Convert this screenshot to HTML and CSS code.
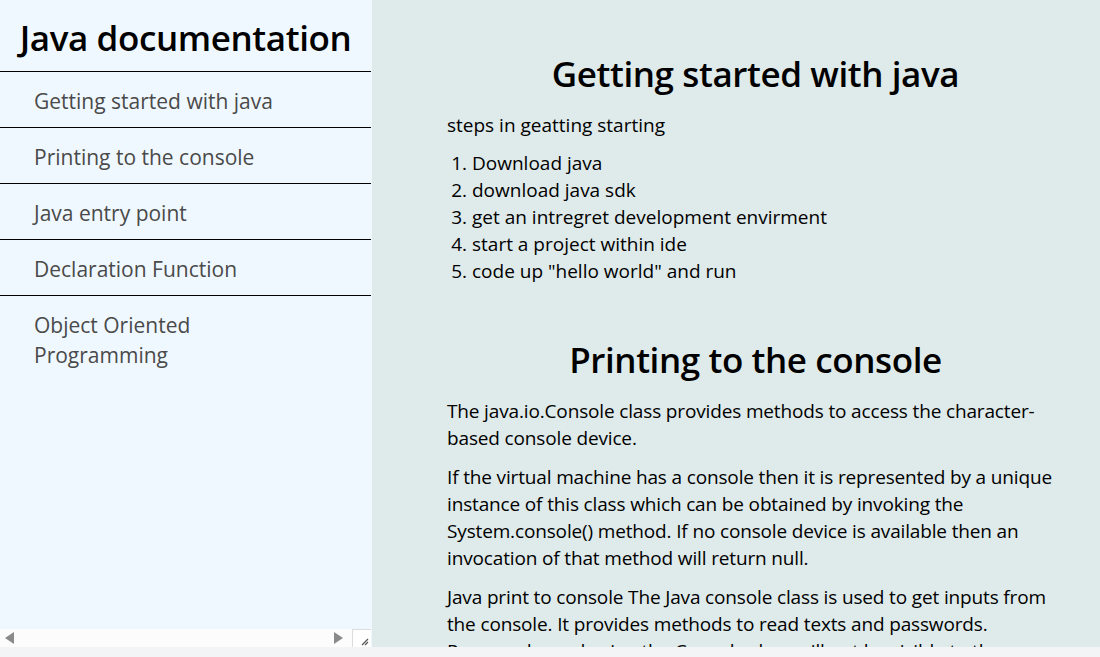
FILE: index.html
```html
<!DOCTYPE html>
<html lang="en">
<head>
<meta charset="utf-8">
<title>Java documentation</title>
<link rel="stylesheet" href="styles.css">
</head>
<body>
<div class="page">
  <div class="top">
    <nav class="nav">
      <div class="nav-scroll">
        <header class="nav-header">Java documentation</header>
        <a class="nav-link" href="#getting">Getting started with java</a>
        <a class="nav-link" href="#printing">Printing to the console</a>
        <a class="nav-link" href="#entry">Java entry point</a>
        <a class="nav-link" href="#declaration">Declaration Function</a>
        <a class="nav-link last" href="#oop">Object Oriented Programming</a>
      </div>
      <div class="hscroll">
        <span class="arrow left"></span>
        <span class="track"></span>
        <span class="arrow right"></span>
        <span class="corner">
          <svg width="10" height="10" viewBox="0 0 10 10"><path d="M9 3 L3 9 M9 6 L6 9" stroke="#555" stroke-width="1.2" fill="none"/></svg>
        </span>
      </div>
    </nav>
    <main class="main">
      <section class="section" id="getting">
        <h1 class="title">Getting started with java</h1>
        <p>steps in geatting starting</p>
        <ol class="steps">
          <li>Download java</li>
          <li>download java sdk</li>
          <li>get an intregret development envirment</li>
          <li>start a project within ide</li>
          <li>code up "hello world" and run</li>
        </ol>
      </section>
      <section class="section" id="printing">
        <h1 class="title">Printing to the console</h1>
        <p class="body">The java.io.Console class provides methods to access the character-based console device.</p>
        <p class="body">If the virtual machine has a console then it is represented by a unique instance of this class which can be obtained by invoking the System.console() method. If no console device is available then an invocation of that method will return null.</p>
        <p class="body">Java print to console The Java console class is used to get inputs from the console. It provides methods to read texts and passwords. Passwords read using the Console class will not be visible to the user.</p>
      </section>
    </main>
  </div>
  <div class="bottom-strip"></div>
</div>
</body>
</html>
```

FILE: styles.css
```css
* { box-sizing: border-box; }
html, body { margin: 0; padding: 0; }
body {
  font-family: "Open Sans", "Noto Sans", sans-serif;
  color: #000;
  background: #f3f4f5;
  overflow: hidden;
}
.page {
  width: 1100px;
  height: 657px;
  display: flex;
  flex-direction: column;
}
.top {
  flex: 1;
  display: flex;
  min-height: 0;
}
.nav {
  width: 372px;
  flex: none;
  background: #f0f8ff;
  display: flex;
  flex-direction: column;
}
.nav-scroll {
  flex: 1;
  display: flex;
  flex-direction: column;
  width: 371px;
}
.nav-header {
  height: 72px;
  border-bottom: 1px solid #000;
  font-size: 35px;
  font-weight: 600;
  text-align: center;
  line-height: 76px;
  letter-spacing: -0.4px;
}
.nav-link {
  display: block;
  height: 56px;
  border-bottom: 1px solid #000;
  padding: 14px 34px 0;
  font-size: 21px;
  line-height: 30px;
  color: #4a4a4a;
  text-decoration: none;
}
.nav-link.last {
  border-bottom: none;
  padding-right: 150px;
}
.hscroll {
  height: 18px;
  display: flex;
  align-items: center;
  background: #fcfcfc;
  width: 371px;
}
.arrow {
  width: 0;
  height: 0;
  border-top: 6px solid transparent;
  border-bottom: 6px solid transparent;
  flex: none;
}
.arrow.left { border-right: 9px solid #8a8a8a; margin-left: 5px; }
.arrow.right { border-left: 9px solid #8a8a8a; margin-right: 9px; }
.track { flex: 1; }
.corner {
  width: 19px;
  height: 18px;
  border-left: 1px solid #dcdcdc;
  border-top: 1px solid #dcdcdc;
  display: flex;
  align-items: flex-end;
  justify-content: flex-end;
  padding: 0 2px 1px 0;
  background: #fff;
}
.main {
  flex: 1;
  background: #dfeaea;
  overflow: hidden;
  padding: 0 36px 0 75px;
}
.section {
  padding-top: 50px;
}
.section + .section { padding-top: 51px; }
.title {
  margin: 0 0 14px;
  text-align: center;
  font-size: 35px;
  font-weight: 600;
  line-height: 48px;
  letter-spacing: -0.4px;
}
p {
  margin: 0 0 11px;
  font-size: 19px;
  line-height: 27px;
}
.steps {
  margin: 0;
  padding-left: 25px;
  font-size: 19px;
  line-height: 27px;
}
.body {
  margin: 0 0 12px;
  letter-spacing: -0.15px;
}
.bottom-strip {
  height: 10px;
  background: #f3f4f5;
  flex: none;
}
```
